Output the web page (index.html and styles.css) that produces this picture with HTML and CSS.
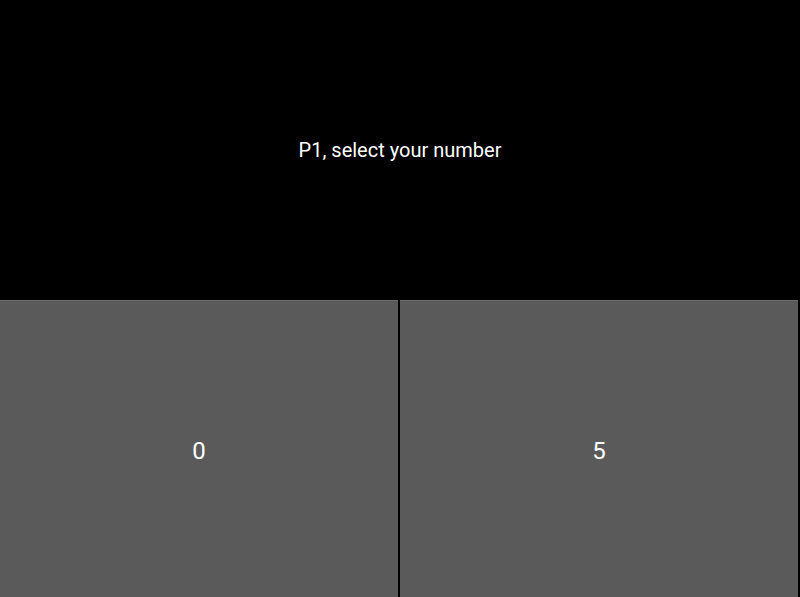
FILE: index.html
```html
<!DOCTYPE html>
<html>
<head>
<meta charset="utf-8">
<link rel="stylesheet" href="styles.css">
</head>
<body>
<div class="app">
  <div class="prompt">P1, select your number</div>
  <div class="choices">
    <button class="choice">0</button>
    <button class="choice">5</button>
  </div>
</div>
</body>
</html>
```
FILE: styles.css
```css
html, body {
  margin: 0;
  padding: 0;
  background: #000;
  overflow: hidden;
}
.app {
  width: 800px;
  height: 597px;
  display: flex;
  flex-direction: column;
  font-family: Roboto, "Liberation Sans", sans-serif;
  color: #fff;
}
.prompt {
  height: 300px;
  flex: none;
  display: flex;
  align-items: center;
  justify-content: center;
  font-size: 20px;
  padding-left: 0;
}
.choices {
  display: grid;
  grid-template-columns: 398px 398px;
  column-gap: 2px;
  height: 300px;
  flex: none;
}
.choice {
  margin: 0;
  border: none;
  border-top: 1px solid #6c6c6c;
  background: #5a5a5a;
  color: #fff;
  font-family: Roboto, "Liberation Sans", sans-serif;
  font-size: 24px;
  padding: 0;
  display: flex;
  align-items: center;
  justify-content: center;
}
```
